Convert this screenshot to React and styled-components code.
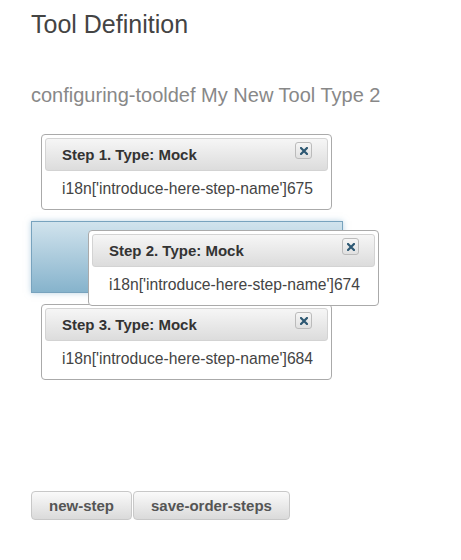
import styled, { createGlobalStyle } from "styled-components";

const GlobalStyle = createGlobalStyle`
  body {
    margin: 0;
    background: #fff;
    font-family: "Liberation Sans", Arial, sans-serif;
  }
`;

const Page = styled.div`
  padding: 9px 0 0 31px;
`;

const Title = styled.h1`
  margin: 0;
  font-size: 25px;
  line-height: 30px;
  font-weight: normal;
  color: #444;
`;

const SubTitle = styled.h2`
  margin: 44px 0 0;
  font-size: 20px;
  line-height: 24px;
  font-weight: normal;
  color: #888;
`;

const StepList = styled.div`
  position: relative;
  display: flex;
  flex-direction: column;
  gap: 11px;
  margin-top: 27px;
`;

const Card = styled.div`
  box-sizing: border-box;
  width: 291px;
  padding: 3px;
  margin-left: ${(p) => (p.$dragging ? 0 : "10px")};
  border: 1px solid #aaa;
  border-radius: 4px;
  background: #fff;
  ${(p) =>
    p.$dragging &&
    `
    position: absolute;
    left: 57px;
    top: 96px;
    z-index: 2;
  `}
`;

const CardHeader = styled.div`
  box-sizing: border-box;
  height: 33px;
  display: flex;
  justify-content: space-between;
  padding: 0 15px 0 16px;
  border: 1px solid #d3d3d3;
  border-radius: 3px;
  background: linear-gradient(#f6f6f6, #dcdcdc);
`;

const HeaderText = styled.span`
  font-size: 15px;
  font-weight: bold;
  line-height: 32px;
  color: #333;
`;

const CloseButton = styled.button`
  box-sizing: border-box;
  width: 17px;
  height: 17px;
  margin-top: 3px;
  padding: 0;
  display: flex;
  align-items: center;
  justify-content: center;
  border: 1px solid #bbb;
  border-radius: 3px;
  background: linear-gradient(#f6f6f6, #e0e0e0);
`;

const CardBody = styled.div`
  padding: 9px 0 8px 17px;
  font-size: 15.7px;
  line-height: 18px;
  color: #444;
`;

const Placeholder = styled.div`
  box-sizing: border-box;
  width: 312px;
  height: 72px;
  border: 1px solid #78a3be;
  background: linear-gradient(#d1e3ed, #86b3cc);
  box-shadow: 0 0 6px rgba(130, 175, 205, 0.55);
`;

const ButtonBar = styled.div`
  display: flex;
  gap: 1px;
  margin-top: 111px;
`;

const Button = styled.button`
  box-sizing: border-box;
  height: 29px;
  padding: 0 17px;
  border: 1px solid #c8c8c8;
  border-radius: 4px;
  background: linear-gradient(#fafafa, #dadada);
  font-family: "Liberation Sans", Arial, sans-serif;
  font-size: 15px;
  font-weight: bold;
  color: #555;
`;

const CloseIcon = () => (
  <svg width="8" height="8" viewBox="0 0 8 8">
    <path d="M1 1 L7 7 M7 1 L1 7" stroke="#2d5873" strokeWidth="2.2" strokeLinecap="square" />
  </svg>
);

const StepCard = ({ n, id, dragging }) => (
  <Card $dragging={dragging}>
    <CardHeader>
      <HeaderText>Step {n}. Type: Mock</HeaderText>
      <CloseButton>
        <CloseIcon />
      </CloseButton>
    </CardHeader>
    <CardBody>i18n['introduce-here-step-name']{id}</CardBody>
  </Card>
);

const App = () => {
  return (
    <Page>
      <GlobalStyle />
      <Title>Tool Definition</Title>
      <SubTitle>configuring-tooldef My New Tool Type 2</SubTitle>
      <StepList>
        <StepCard n={1} id={675} />
        <Placeholder />
        <StepCard n={2} id={674} dragging />
        <StepCard n={3} id={684} />
      </StepList>
      <ButtonBar>
        <Button>new-step</Button>
        <Button>save-order-steps</Button>
      </ButtonBar>
    </Page>
  );
};

export default App;
